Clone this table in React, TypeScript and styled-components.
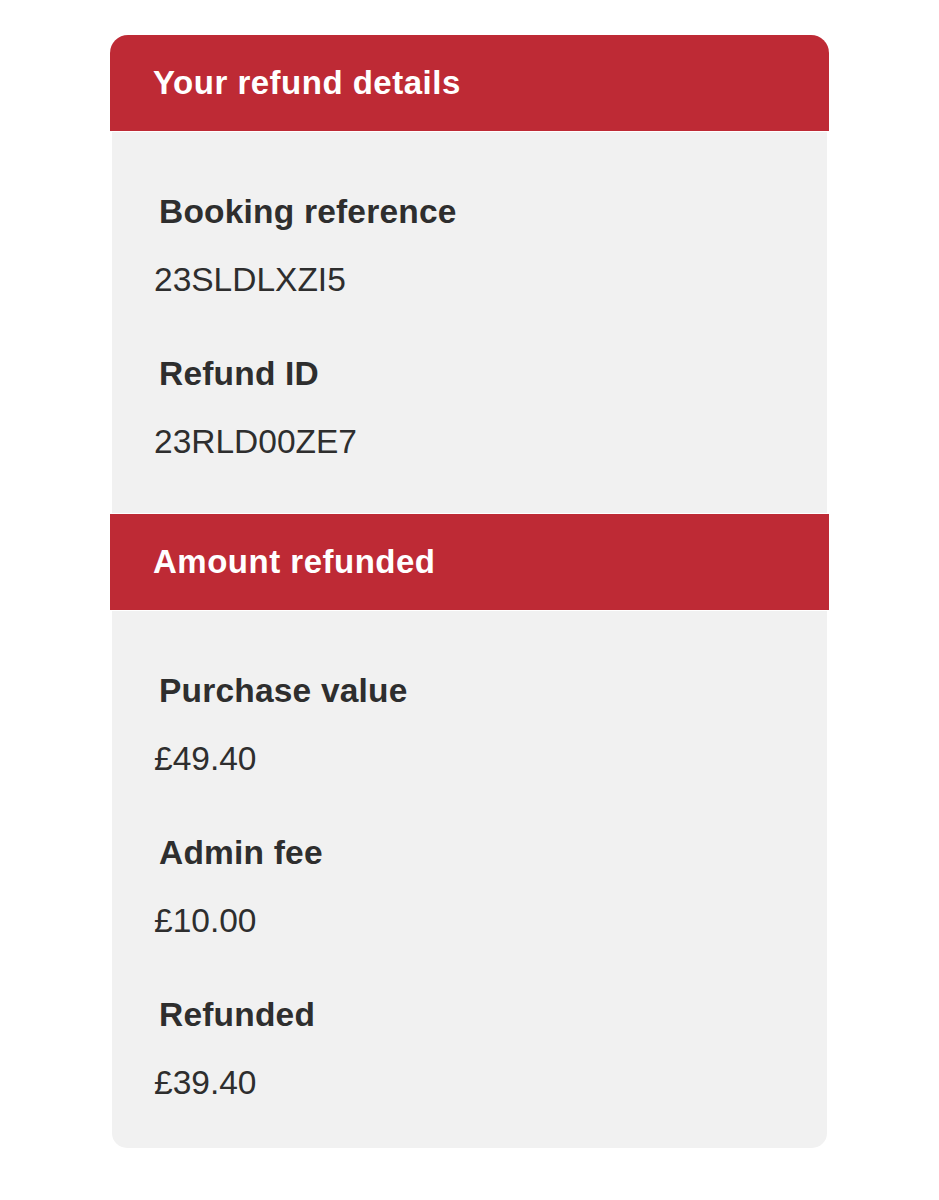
import { createGlobalStyle } from 'styled-components'
import styled from 'styled-components'

const GlobalStyle = createGlobalStyle`
  body {
    margin: 0;
    background: #ffffff;
    font-family: 'Liberation Sans', Arial, Helvetica, sans-serif;
  }
`

const Card = styled.div`
  width: 719px;
  margin: 35px auto 0;
  display: flex;
  flex-direction: column;
  gap: 1px;
`

const Header = styled.div<{ $first?: boolean }>`
  height: 96px;
  display: flex;
  align-items: center;
  padding: 0 43px;
  background: #be2a35;
  border-radius: ${(p) => (p.$first ? '18px 18px 0 0' : '0')};
  color: #ffffff;
  font-size: 33px;
  font-weight: 700;
  letter-spacing: 0.5px;
`

const Body = styled.div<{ $last?: boolean }>`
  margin: 0 2px;
  padding: 60px 42px ${(p) => (p.$last ? '45px' : '51px')};
  background: #f1f1f1;
  border-radius: ${(p) => (p.$last ? '0 0 15px 15px' : '0')};
  display: flex;
  flex-direction: column;
  gap: 54px;
`

const Field = styled.div`
  display: flex;
  flex-direction: column;
  gap: 28px;
`

const Label = styled.div`
  padding-left: 5px;
  font-size: 33.5px;
  line-height: 40px;
  font-weight: 700;
  color: #2e2e2e;
  letter-spacing: 0.2px;
`

const Value = styled.div`
  font-size: 33.5px;
  line-height: 40px;
  font-weight: 400;
  color: #2e2e2e;
`

const details = [
  { label: 'Booking reference', value: '23SLDLXZI5' },
  { label: 'Refund ID', value: '23RLD00ZE7' },
]

const amounts = [
  { label: 'Purchase value', value: '£49.40' },
  { label: 'Admin fee', value: '£10.00' },
  { label: 'Refunded', value: '£39.40' },
]

export default function App() {
  return (
    <>
      <GlobalStyle />
      <Card>
        <Header $first>Your refund details</Header>
        <Body>
          {details.map((d) => (
            <Field key={d.label}>
              <Label>{d.label}</Label>
              <Value>{d.value}</Value>
            </Field>
          ))}
        </Body>
        <Header>Amount refunded</Header>
        <Body $last>
          {amounts.map((d) => (
            <Field key={d.label}>
              <Label>{d.label}</Label>
              <Value>{d.value}</Value>
            </Field>
          ))}
        </Body>
      </Card>
    </>
  )
}
